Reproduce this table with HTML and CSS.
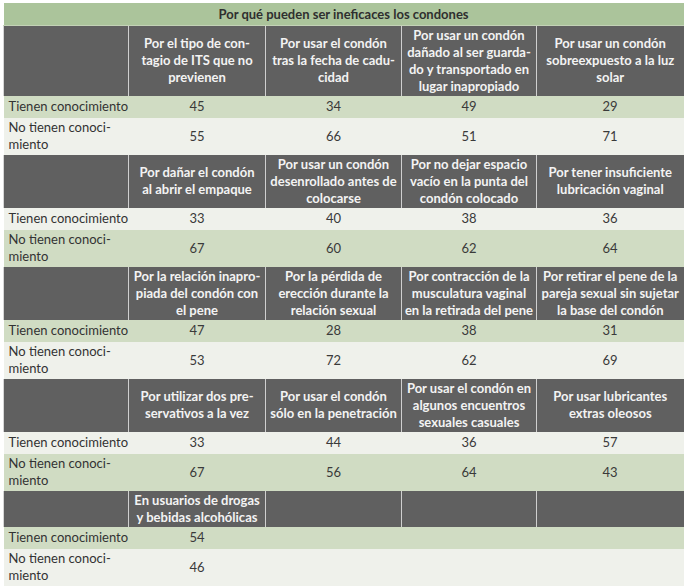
FILE: index.html
```html
<!DOCTYPE html>
<html lang="es">
<head>
<meta charset="utf-8">
<title>Por qué pueden ser ineficaces los condones</title>
<link rel="stylesheet" href="styles.css">
</head>
<body>
<table class="tbl">
  <colgroup>
    <col class="c-label"><col class="c-a"><col class="c-b"><col class="c-c"><col class="c-d">
  </colgroup>
  <tbody>
    <tr class="title-row"><th colspan="5" class="title">Por qué pueden ser ineficaces los condones</th></tr>

    <tr class="head">
      <th class="corner"></th>
      <th>Por el tipo de con-<br>tagio de ITS que no<br>previenen</th>
      <th>Por usar el condón<br>tras la fecha de cadu-<br>cidad</th>
      <th>Por usar un condón<br>dañado al ser guarda-<br>do y transportado en<br>lugar inapropiado</th>
      <th>Por usar un condón<br>sobreexpuesto a la luz<br>solar</th>
    </tr>
    <tr class="one green"><td class="lbl">Tienen conocimiento</td><td>45</td><td>34</td><td>49</td><td>29</td></tr>
    <tr class="two light"><td class="lbl">No tienen conoci-<br>miento</td><td>55</td><td>66</td><td>51</td><td>71</td></tr>

    <tr class="head">
      <th class="corner"></th>
      <th>Por dañar el condón<br>al abrir el empaque</th>
      <th>Por usar un condón<br>desenrollado antes de<br>colocarse</th>
      <th>Por no dejar espacio<br>vacío en la punta del<br>condón colocado</th>
      <th>Por tener insuficiente<br>lubricación vaginal</th>
    </tr>
    <tr class="one light"><td class="lbl">Tienen conocimiento</td><td>33</td><td>40</td><td>38</td><td>36</td></tr>
    <tr class="two green"><td class="lbl">No tienen conoci-<br>miento</td><td>67</td><td>60</td><td>62</td><td>64</td></tr>

    <tr class="head">
      <th class="corner"></th>
      <th>Por la relación inapro-<br>piada del condón con<br>el pene</th>
      <th>Por la pérdida de<br>erección durante la<br>relación sexual</th>
      <th>Por contracción de la<br>musculatura vaginal<br>en la retirada del pene</th>
      <th>Por retirar el pene de la<br>pareja sexual sin sujetar<br>la base del condón</th>
    </tr>
    <tr class="one green"><td class="lbl">Tienen conocimiento</td><td>47</td><td>28</td><td>38</td><td>31</td></tr>
    <tr class="two light"><td class="lbl">No tienen conoci-<br>miento</td><td>53</td><td>72</td><td>62</td><td>69</td></tr>

    <tr class="head">
      <th class="corner"></th>
      <th>Por utilizar dos pre-<br>servativos a la vez</th>
      <th>Por usar el condón<br>sólo en la penetración</th>
      <th>Por usar el condón en<br>algunos encuentros<br>sexuales casuales</th>
      <th>Por usar lubricantes<br>extras oleosos</th>
    </tr>
    <tr class="one light"><td class="lbl">Tienen conocimiento</td><td>33</td><td>44</td><td>36</td><td>57</td></tr>
    <tr class="two green"><td class="lbl">No tienen conoci-<br>miento</td><td>67</td><td>56</td><td>64</td><td>43</td></tr>

    <tr class="head">
      <th class="corner"></th>
      <th>En usuarios de drogas<br>y bebidas alcohólicas</th>
      <th></th>
      <th></th>
      <th></th>
    </tr>
    <tr class="one green"><td class="lbl">Tienen conocimiento</td><td>54</td><td></td><td></td><td></td></tr>
    <tr class="two light"><td class="lbl">No tienen conoci-<br>miento</td><td>46</td><td></td><td></td><td></td></tr>
  </tbody>
</table>
</body>
</html>
```

FILE: styles.css
```css
html, body {
  margin: 0;
  padding: 0;
  background: #ffffff;
}

body {
  padding: 3px 0 0 3px;
  font-family: Lato, "Open Sans", "Noto Sans", sans-serif;
}

.tbl {
  border-collapse: collapse;
  table-layout: fixed;
  width: 680px;
  font-size: 13px;
  color: #333333;
}

.c-label { width: 125px; }
.c-a { width: 137px; }
.c-b { width: 136px; }
.c-c { width: 135px; }
.c-d { width: 147px; }

.tbl th,
.tbl td {
  padding: 0;
  text-align: center;
  vertical-align: middle;
}

.title-row { height: 22px; }

.title {
  background: #abc49b;
  color: #2f2f2f;
  font-weight: 700;
  font-size: 13px;
  line-height: 16px;
  padding-top: 3px;
  border-bottom: 1px solid #c3d2b6;
}

.head th {
  background: #606060;
  color: #f3f3f3;
  font-weight: 700;
  font-size: 13px;
  line-height: 17px;
  padding: 1px 0;
  border-left: 1px solid #cfcfcf;
}

.head th.corner {
  border-left: 1px solid #d6d6d6;
}

.one { height: 22px; }
.two { height: 37px; }

.tbl td {
  line-height: 17px;
  color: #3a3a3a;
}

.tbl td.lbl {
  text-align: left;
  padding-left: 5px;
  color: #333333;
}

.green td { background: #d0dcc3; }
.light td { background: #eff1eb; }
```
